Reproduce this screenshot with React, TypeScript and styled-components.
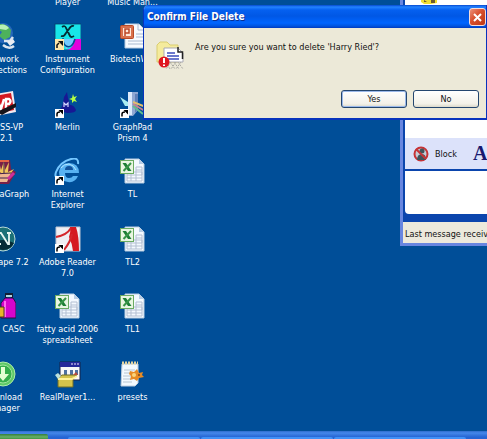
import React from "react";
import styled, { createGlobalStyle, css } from "styled-components";

const Global = createGlobalStyle`
  * { box-sizing: border-box; }
  body { margin: 0; overflow: hidden; background: #004e98; }
`;

const uiFont = css`
  font-family: "DejaVu Sans Condensed", "DejaVu Sans", sans-serif;
  font-size: 9px;
`;

const Desktop = styled.main`
  position: relative;
  display: flex;
  flex-direction: column;
  height: 100vh;
  overflow: hidden;
  background: #004e98;
  ${uiFont}
`;

const IconGrid = styled.section`
  flex: 1;
  min-height: 0;
  display: grid;
  grid-template-columns: 66px 65px 65px;
  grid-template-rows: 26px 68px 67px 68px 67px 68px 67px;
  margin: -3px 0 0 -31px;
`;

const Shortcut = styled.a`
  display: flex;
  flex-direction: column;
  align-items: center;
  gap: 4px;
  color: #fff;
  text-align: center;
  text-decoration: none;
  line-height: 11px;
  white-space: pre;
`;

const Cut = styled.span`
  align-self: flex-start;
  padding-left: 31px;
  text-align: left;
`;

const Glyph = styled.svg`
  display: block;
  flex: none;
  width: 27px;
  height: 27px;
`;

const Arrow = () => (
  <g>
    <rect x="1" y="18" width="9" height="9" fill="#fff" />
    <path d="M3 25.500V23q0-2 3-2" fill="none" stroke="#000" strokeWidth="1.500" />
    <path d="M4.500 19H9v4.500z" fill="#000" />
  </g>
);

const Excel = () => (
  <Glyph viewBox="0 0 27 27">
    <path d="M6 1h14l5 5v19H6z" fill="#f4f9ff" stroke="#b8cce0" />
    <path d="M20 1v5h5" fill="#b7cce4" />
    <path d="M8 14h15v9H8zM8 17h15M8 20h15M12 14v9M17 9v14M17 9h6v8M17 12h6" fill="none" stroke="#b3bfd2" />
    <rect x="1.500" y="2.500" width="13" height="13" fill="#e9f6e2" stroke="#6bab62" />
    <path d="M3.500 5h3.500l5.500 8H9z" fill="#1d7f35" />
    <path d="M12 5 4.500 13" stroke="#379447" strokeWidth="2" />
  </Glyph>
);

const Network = () => (
  <Glyph viewBox="0 0 27 27">
    <circle cx="14" cy="10" r="10" fill="#2667bb" />
    <path d="M10 1q8-1 12 6l-1 7-6 3-5-4 3-4-5-3z" fill="#4db25b" />
    <path d="M11 2q5-2 9 3l-3 2-6-1z" fill="#b7efb3" />
    <path d="M15 18h6l3-4M14 22q6 5 11 1" fill="none" stroke="#dbe5f0" strokeWidth="2.500" />
    <path d="m18 19 6-3 2 3-5 4z" fill="#e9edf3" />
  </Glyph>
);

const Instrument = () => (
  <Glyph viewBox="0 0 27 27">
    <rect x="1" y="1" width="26" height="26" fill="#18e6e8" stroke="#063f6c" strokeWidth=".8" />
    <path d="M9 16h11q-1 8-8 10z" fill="#75cbff" />
    <path d="M21 16h6v11H13q7-2 8-11z" fill="#e400dc" />
    <path d="M9 15q0 6 3 8 6 3 9-7" fill="none" stroke="#08478b" strokeWidth="1.500" />
    <path d="M8 4q3-2 4 1l4 8q1 2 4 0M20 3q-3-1-5 3l-3 4q-2 4-5 3" fill="none" stroke="#052d34" strokeWidth="1.800" />
    <rect x="1" y="16" width="9" height="11" fill="#ffe6a8" />
    <path d="M3 25v-3l2-2" fill="none" stroke="#111" strokeWidth="1.500" />
    <path d="M4 18h5v5z" fill="#111" />
  </Glyph>
);

const PowerPoint = () => (
  <Glyph viewBox="0 0 27 27">
    <path d="M6 1h14l6 6v18H6z" fill="#f7fbff" stroke="#b8cce0" />
    <path d="M19 1v6h7M17 11h7M17 14h7M9 18h15M9 21h15" fill="none" stroke="#a9bad0" />
    <rect x="1.500" y="2.500" width="13" height="13" rx="1" fill="#d8714d" stroke="#b94a26" />
    <path d="M4 5h8v8H4z" fill="#ffe8da" />
    <path d="M6 13V6h4v4H6" fill="none" stroke="#bd4525" strokeWidth="1.500" />
  </Glyph>
);

const VpLogo = () => (
  <Glyph viewBox="0 0 27 27">
    <path d="M0 4 24 0l3 21-20 4-7-2z" fill="#f2eaf0" />
    <path d="m0 6 22-4 3 17-18 4-7-3z" fill="#d31720" />
    <path d="m8 8 4 10 3-10M17 17V8h3q3 2 0 5h-3" fill="none" stroke="#fff" strokeWidth="2.500" />
    <path d="m8 21 19-9v4L13 24z" fill="#17151b" />
  </Glyph>
);

const Merlin = () => (
  <Glyph viewBox="0 0 27 27">
    <path d="M4 19q4-1 5-7l1-6 3-5 1 6 2 7q4 0 6 5 0 3-9 3z" fill="#171894" />
    <path d="M10 16v-4l2 2 2-2v4" fill="none" stroke="#d5d8ff" strokeWidth="1.200" />
    <path d="m19 3 1 3 3-1-2 3 2 3-3-1-2 2v-3l-3-1 3-1z" fill="#b3ff43" />
    <Arrow />
  </Glyph>
);

const Prism = () => (
  <Glyph viewBox="0 0 27 27">
    <path d="M9 1h10v18l-5 6H9z" fill="#8fa8d2" />
    <path d="M9 1h4v23H9z" fill="#dceafb" />
    <path d="M16 3h3v15l-3 4z" fill="#5f80b8" />
    <path d="M1 6 9 11v4H6z" fill="#a9edf2" />
    <path d="m14 11 13 5" stroke="#e1bd6e" strokeWidth="2" />
    <path d="m14 13 12 7" stroke="#c88090" strokeWidth="2" />
    <path d="m14 15 10 8" stroke="#63bb8d" strokeWidth="2" />
    <Arrow />
  </Glyph>
);

const Kaleida = () => (
  <Glyph viewBox="0 0 27 27">
    <path d="M4 2h17l1 9 5 3-7 12H5z" fill="#782047" />
    <path d="m7 12 3-9 2 9 3-9 1 9 4-8-1 10 6-3-6 8z" fill="#f0c65a" />
    <path d="M5 15h17l-4 9H7z" fill="#efb590" />
    <path d="m5 16 17-1M6 20h14M10 3v12M15 3v12" stroke="#3f214a" />
    <path d="m19 21 6-6" stroke="#ce2f99" strokeWidth="3" />
    <path d="M5 3h15" stroke="#e56546" strokeWidth="2" />
  </Glyph>
);

const Explorer = () => (
  <Glyph viewBox="0 0 27 27">
    <path d="M24 18q-3 7-10 6-9-1-9-10 1-9 10-9 10 0 10 10H11q0 5 4 5 3 0 4-2z" fill="#58b2f2" />
    <path d="M11 12h8q0-4-4-4t-4 4z" fill="#12539c" />
    <path d="M5 20q-5 0-3-6Q6 4 17 1q8-2 7 5" fill="none" stroke="#75c7ff" strokeWidth="2" />
    <path d="M7 10q3-4 8-4 5 1 7 6" fill="none" stroke="#b7e8ff" />
    <Arrow />
  </Glyph>
);

const Netscape = () => (
  <Glyph viewBox="0 0 27 27">
    <circle cx="14" cy="13" r="12" fill="#1b7076" stroke="#b8d9d8" />
    <path d="M3 17q11-6 22 0-3 7-11 7-8-1-11-7z" fill="#052b35" />
    <path d="M10 18V7h2l7 11h1V7M8 7h4M18 7h4M8 18h4" fill="none" stroke="#e7f5f0" strokeWidth="1.800" />
  </Glyph>
);

const Adobe = () => (
  <Glyph viewBox="0 0 27 27">
    <path d="M2 1h24v24H2z" fill="#efeff3" stroke="#bdc5d4" />
    <path d="M16 1h6q3 9 3 24h-6q-1-8-4-14 2-5 1-10z" fill="#d51920" />
    <path d="M2 11Q13 9 17 2M10 24q7-9 8-16" fill="none" stroke="#d4262b" strokeWidth="2" />
    <Arrow />
  </Glyph>
);

const Bag = () => (
  <Glyph viewBox="0 0 27 27">
    <path d="M17 6V1h6v5" fill="none" stroke="#111d33" strokeWidth="2" />
    <path d="M16 5h8l3 5v15H12V10z" fill="#d505cc" stroke="#271044" />
    <path d="M16 8v16" stroke="#ff69ef" strokeWidth="2" />
    <path d="M5 14h10v10H5z" fill="#e7b629" stroke="#4d3b16" />
    <path d="M17 3h6" stroke="#b0d5df" strokeWidth="2" />
  </Glyph>
);

const Download = () => (
  <Glyph viewBox="0 0 27 27">
    <circle cx="14" cy="13" r="12" fill="#5fc968" stroke="#afeca9" />
    <circle cx="14" cy="13" r="9" fill="#35ae4c" stroke="#a1e59c" />
    <path d="M12 6h4v7h4l-6 7-6-7h4z" fill="#e4ffd3" />
  </Glyph>
);

const Installer = () => (
  <Glyph viewBox="0 0 27 27">
    <path d="M6 1h20v18H6z" fill="#f8f8f8" stroke="#142047" />
    <path d="M6 1h20v5H6z" fill="#26299a" />
    <path d="M17 3h8" stroke="#f4e8ff" strokeDasharray="2 1" />
    <path d="M10 9h3v5h-3zM16 9h3v5h-3zM21 9h3v5h-3z" fill="#4f72a1" />
    <path d="m4 17 4-3h15l-4 3v9H4z" fill="#d4c44c" stroke="#6f6d27" />
    <path d="M4 18h14l5-3" fill="none" stroke="#fff39a" strokeWidth="2" />
    <path d="m1 14 3-2 3 3-3 3z" fill="#bce0db" />
    <path d="m19 14 3-3 2 3z" fill="#ba4d3c" />
  </Glyph>
);

const Presets = () => (
  <Glyph viewBox="0 0 27 27">
    <path d="M3 3h16v19l-3 3H2z" fill="#f3faff" stroke="#bdcddd" />
    <path d="M3 2h16" stroke="#e4d5a2" strokeWidth="3" strokeDasharray="2 1" />
    <path d="M5 9h11M5 12h8M4 15h8M4 18h8M4 21h9" stroke="#b7c6d2" />
    <path d="m11 10 4 1 3-3 2 4 4-1-1 3 2 2-5 1-2 3-3-2-4 1 1-4-2-2z" fill="#e78b24" />
    <circle cx="15" cy="14" r="2" fill="#fcd67a" />
    <circle cx="20" cy="14" r="1" fill="#814719" />
  </Glyph>
);

type Item = { label: string; icon?: React.FC; cut?: boolean };

const items: Item[] = [
  { label: "" },
  { label: "Player" },
  { label: "Music Man..." },
  { label: "Network\nConnections", icon: Network },
  { label: "Instrument\nConfiguration", icon: Instrument },
  { label: "BiotechW...", icon: PowerPoint },
  { label: "SS-VP\n2.1", icon: VpLogo, cut: true },
  { label: "Merlin", icon: Merlin },
  { label: "GraphPad\nPrism 4", icon: Prism },
  { label: "KaleidaGraph", icon: Kaleida },
  { label: "Internet\nExplorer", icon: Explorer },
  { label: "TL", icon: Excel },
  { label: "Netscape 7.2", icon: Netscape },
  { label: "Adobe Reader\n7.0", icon: Adobe },
  { label: "TL2", icon: Excel },
  { label: " CASC", icon: Bag, cut: true },
  { label: "fatty acid 2006\nspreadsheet", icon: Excel },
  { label: "TL1", icon: Excel },
  { label: "Download\nManager", icon: Download },
  { label: "RealPlayer1...", icon: Installer },
  { label: "presets", icon: Presets },
];

const Messenger = styled.section`
  position: absolute;
  top: 0;
  left: 400px;
  right: 0;
  border-left: 3px solid #6886e0;
  border-bottom: 3px solid #6886e0;
  background: #0b45ad;
`;

const Chat = styled.div`
  height: 138px;
  margin-left: 2px;
  padding-left: 16px;
  background: #fff;
`;

const Smiley = styled.svg`
  display: block;
  width: 17px;
  height: 5px;
`;

const Tools = styled.div`
  display: flex;
  align-items: center;
  height: 31px;
  margin-left: 2px;
  padding-left: 8px;
  background: #dce2fa;
  overflow: hidden;
`;

const ToolButton = styled.button`
  display: flex;
  align-items: center;
  gap: 6px;
  padding: 0;
  border: 0;
  background: none;
  color: #111;
  flex: none;
  ${uiFont}
`;

const BlockIcon = styled.svg`
  width: 16px;
  height: 16px;
`;

const FontButton = styled(ToolButton)`
  margin-left: 16px;
  color: #17186e;
  font: bold 20px "Liberation Serif", serif;
`;

const Compose = styled.textarea`
  display: block;
  width: calc(100% - 2px);
  height: 43px;
  margin: 2px 0 8px 2px;
  border: 0;
  border-radius: 0 0 0 4px;
  background: #fff;
  resize: none;
`;

const Status = styled.footer`
  padding: 7px 0 3px 2px;
  background: #ece9dc;
  color: #111;
  line-height: 11px;
  white-space: nowrap;
  overflow: hidden;
`;

const Dialog = styled.section`
  position: absolute;
  top: 5px;
  left: 143px;
  right: 0;
  border: 1px solid #0733bd;
  border-top: 0;
  border-bottom-width: 2px;
  border-radius: 5px 0 0 0;
  background: #ece9d8;
  overflow: hidden;
`;

const TitleBar = styled.header`
  display: flex;
  align-items: center;
  justify-content: space-between;
  height: 23px;
  padding: 1px 0 0 3px;
  background: linear-gradient(#0548cf, #2383ff 2px, #0560f0 5px, #0057e5 11px, #0065ff 18px, #0054df 21px, #003ac0);
`;

const Title = styled.h1`
  margin: 0;
  color: #fff;
  font: bold 10px/16px "DejaVu Sans Condensed", "DejaVu Sans", sans-serif;
  text-shadow: 1px 1px #0b2f91;
`;

const Close = styled.button`
  display: grid;
  place-items: center;
  width: 17px;
  height: 18px;
  padding: 0;
  border: 1px solid #f6ddda;
  border-radius: 3px;
  background: linear-gradient(135deg, #ec927c, #d84f2d 45%, #bd3714);
`;

const Cross = styled.svg`
  width: 11px;
  height: 11px;
`;

const Message = styled.div`
  display: flex;
  align-items: flex-start;
  gap: 11px;
  height: 62px;
  padding: 12px 8px 0 12px;
`;

const DeleteIcon = styled.svg`
  flex: none;
  width: 28px;
  height: 30px;
`;

const Question = styled.p`
  margin: 1px 0 0;
  color: #111;
  line-height: 13px;
`;

const Actions = styled.div`
  display: flex;
  justify-content: flex-end;
  gap: 6px;
  padding: 0 7px 10px;
`;

const Action = styled.button<{ $primary?: boolean }>`
  width: 66px;
  height: 18px;
  padding: 0;
  border: 1px solid #24466f;
  border-radius: 3px;
  background: linear-gradient(#fff, #f3f1e8 80%, #dbd8ca);
  box-shadow: ${(p) => (p.$primary ? "inset 0 0 0 1px #9bb9ea" : "none")};
  color: #111;
  ${uiFont}
`;

const Taskbar = styled.nav`
  display: flex;
  align-items: flex-end;
  flex: none;
  height: 8px;
  background: linear-gradient(#2e6ccb, #4487ec 2px, #3576dd 4px, #2665d5 6px);
`;

const Start = styled.div`
  width: 48px;
  height: 5px;
  margin-right: 20px;
  border-radius: 0 2px 0 0;
  background: linear-gradient(#347f3c, #69af68 3px, #3f963f);
`;

const Task = styled.div`
  flex: 0 0 132px;
  height: 2px;
  margin-right: 1px;
  border-radius: 2px 2px 0 0;
  background: #4191f7;
`;

export default function App() {
  return (
    <>
      <Global />
      <Desktop>
        <IconGrid>
          {items.map(({ label, icon: Icon, cut }, i) => (
            <Shortcut key={i} href="#">
              {Icon && <Icon />}
              {cut ? <Cut>{label}</Cut> : <span>{label}</span>}
            </Shortcut>
          ))}
        </IconGrid>
        <Taskbar>
          <Start />
          <Task />
          <Task />
          <Task />
        </Taskbar>

        <Messenger>
          <Chat>
            <Smiley viewBox="0 0 17 5">
              <path d="M0 0h16v3l-6 1H3L0 2z" fill="#f1df30" />
              <path d="M3 0v2h3M10 0h4v3h-4z" fill="#6c5b2f" />
            </Smiley>
          </Chat>
          <Tools>
            <ToolButton>
              <BlockIcon viewBox="0 0 16 16">
                <circle cx="8" cy="8" r="6.500" fill="#c6ccd6" stroke="#c63336" strokeWidth="2" />
                <circle cx="9" cy="5" r="2.500" fill="#40545b" />
                <path d="M4 14q0-6 5-6 4 0 4 6z" fill="#40545b" />
                <path d="m3 3 10 10" stroke="#c63336" strokeWidth="2" />
              </BlockIcon>
              Block
            </ToolButton>
            <FontButton>A</FontButton>
          </Tools>
          <Compose aria-label="Message" />
          <Status>Last message received</Status>
        </Messenger>

        <Dialog role="dialog" aria-labelledby="dialog-title">
          <TitleBar>
            <Title id="dialog-title">Confirm File Delete</Title>
            <Close aria-label="Close">
              <Cross viewBox="0 0 11 11">
                <path d="m2 2 7 7M9 2 2 9" stroke="#fff" strokeWidth="2" />
              </Cross>
            </Close>
          </TitleBar>
          <Message>
            <DeleteIcon viewBox="0 0 28 30">
              <path d="M1 22V5l3-3h7l3 3h8v17z" fill="#f5eb9c" stroke="#d9cd71" />
              <path d="M8 8h14l5 5v9H8z" fill="#fff" stroke="#a9a9b3" />
              <path d="M22 7v5h4.500v7" fill="none" stroke="#222" strokeWidth="1.500" />
              <path d="M11 13h8M11 16h12M11 19h12" stroke="#6b78cc" strokeWidth="2" />
              <path d="m10 22 4 7m0-7 5 7m-1-7 5 7m-1-7 5 7M15 22l-5 7m10-7-5 7m10-7-5 7" stroke="#aaa9a2" strokeDasharray="2 1" />
              <circle cx="8" cy="22" r="5.500" fill="#df1720" />
              <path d="M8 18v5M8 24.500V26" stroke="#fff" strokeWidth="2" />
            </DeleteIcon>
            <Question>Are you sure you want to delete 'Harry Ried'?</Question>
          </Message>
          <Actions>
            <Action $primary>Yes</Action>
            <Action>No</Action>
          </Actions>
        </Dialog>
      </Desktop>
    </>
  );
}
